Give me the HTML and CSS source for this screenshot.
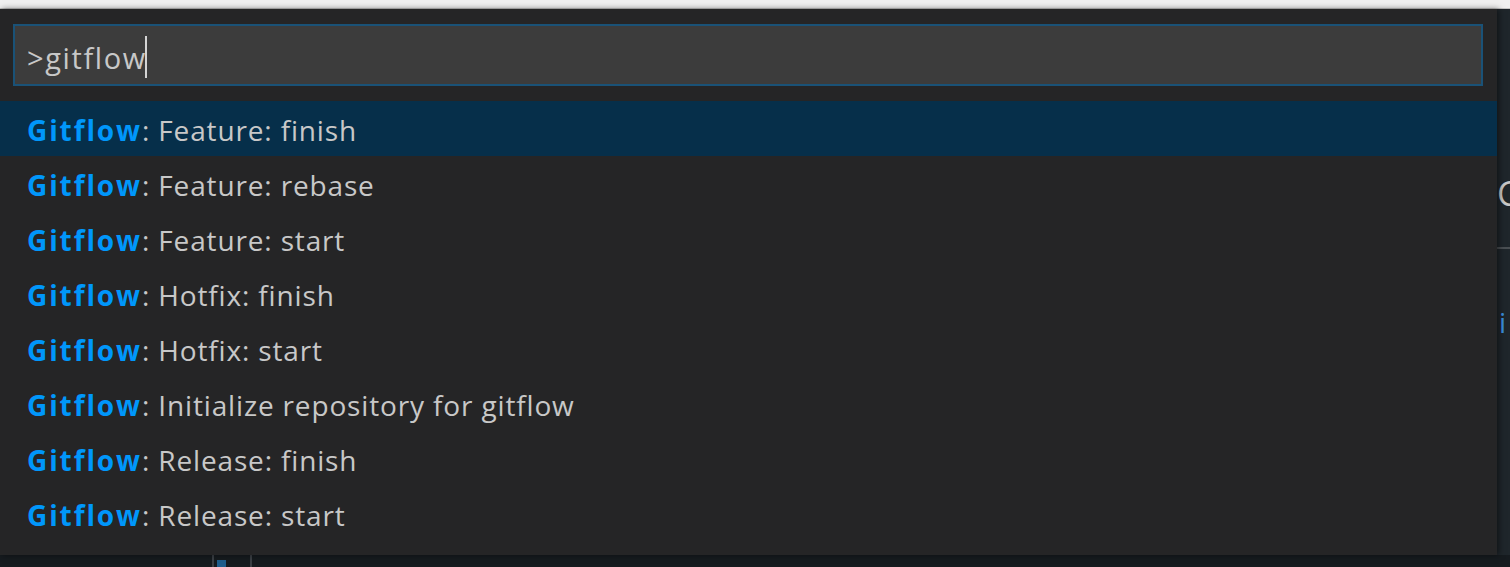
FILE: index.html
```html
<!DOCTYPE html>
<html>
<head>
<meta charset="utf-8">
<link rel="stylesheet" href="styles.css">
</head>
<body>
<div class="top"></div>
<div class="main">
  <div class="panel">
    <div class="input"><span class="query">&gt;gitflow</span><span class="caret"></span></div>
    <ul class="list">
      <li class="row selected"><span class="hl">Gitflow</span>: Feature: finish</li>
      <li class="row"><span class="hl">Gitflow</span>: Feature: rebase</li>
      <li class="row"><span class="hl">Gitflow</span>: Feature: start</li>
      <li class="row"><span class="hl">Gitflow</span>: Hotfix: finish</li>
      <li class="row"><span class="hl">Gitflow</span>: Hotfix: start</li>
      <li class="row"><span class="hl">Gitflow</span>: Initialize repository for gitflow</li>
      <li class="row"><span class="hl">Gitflow</span>: Release: finish</li>
      <li class="row"><span class="hl">Gitflow</span>: Release: start</li>
    </ul>
  </div>
  <div class="side">
    <div class="side-c">C</div>
    <div class="side-line"></div>
    <div class="side-i">i</div>
  </div>
</div>
<div class="bottom">
  <div class="vline first"></div>
  <div class="bluebit"></div>
  <div class="vline second"></div>
</div>
</body>
</html>
```
FILE: styles.css
```css
html, body {
  margin: 0;
  padding: 0;
  width: 1510px;
  height: 567px;
  overflow: hidden;
  background: #1c2227;
  font-family: "Open Sans", "Noto Sans", sans-serif;
}
.top {
  height: 8px;
  background: #f0f0f0;
  border-bottom: 1px solid #c4c4c4;
}
.main {
  display: flex;
  height: 546px;
}
.panel {
  width: 1497px;
  flex: none;
  background: #252526;
  box-sizing: border-box;
  padding-top: 15px;
  box-shadow: 2px 0 6px rgba(0,0,0,0.5);
  position: relative;
  z-index: 1;
}
.input {
  margin-left: 13px;
  width: 1470px;
  height: 62px;
  box-sizing: border-box;
  border: 2px solid #1a5277;
  background: #3c3c3c;
  display: flex;
  align-items: center;
  padding-left: 12px;
  color: #c8c8c8;
  font-size: 29px;
}
.query {
  letter-spacing: 1.6px;
  position: relative;
  top: 2px;
}
.caret {
  display: inline-block;
  width: 2px;
  height: 42px;
  background: #d4d4d4;
  margin-left: -2px;
  position: relative;
  top: 2px;
}
.list {
  list-style: none;
  margin: 15px 0 0;
  padding: 0;
}
.row {
  height: 55px;
  line-height: 59px;
  padding-left: 27px;
  color: #c8c8c8;
  font-size: 28px;
  letter-spacing: 0.85px;
  white-space: nowrap;
}
.row.selected {
  background: #062f4a;
}
.hl {
  color: #0097fb;
  font-weight: 700;
  letter-spacing: 1.9px;
}
.side {
  flex: 1;
  background: #1f262b;
  display: flex;
  flex-direction: column;
  overflow: hidden;
}
.side-c {
  margin-top: 164px;
  margin-left: 0;
  color: #c8c8c8;
  font-size: 34px;
  line-height: 40px;
  height: 40px;
}
.side-line {
  margin-top: 34px;
  height: 2px;
  background: #4a4f53;
}
.side-i {
  margin-top: 58px;
  margin-left: 2px;
  color: #3a8fe0;
  font-size: 28px;
  line-height: 30px;
}
.bottom {
  height: 12px;
  background: #161b1f;
  display: flex;
}
.vline {
  width: 2px;
  background: #3a3f44;
}
.vline.first {
  margin-left: 212px;
}
.bluebit {
  width: 9px;
  margin-left: 3px;
  margin-top: 5px;
  background: #1f5d8c;
}
.vline.second {
  margin-left: 24px;
}
```
